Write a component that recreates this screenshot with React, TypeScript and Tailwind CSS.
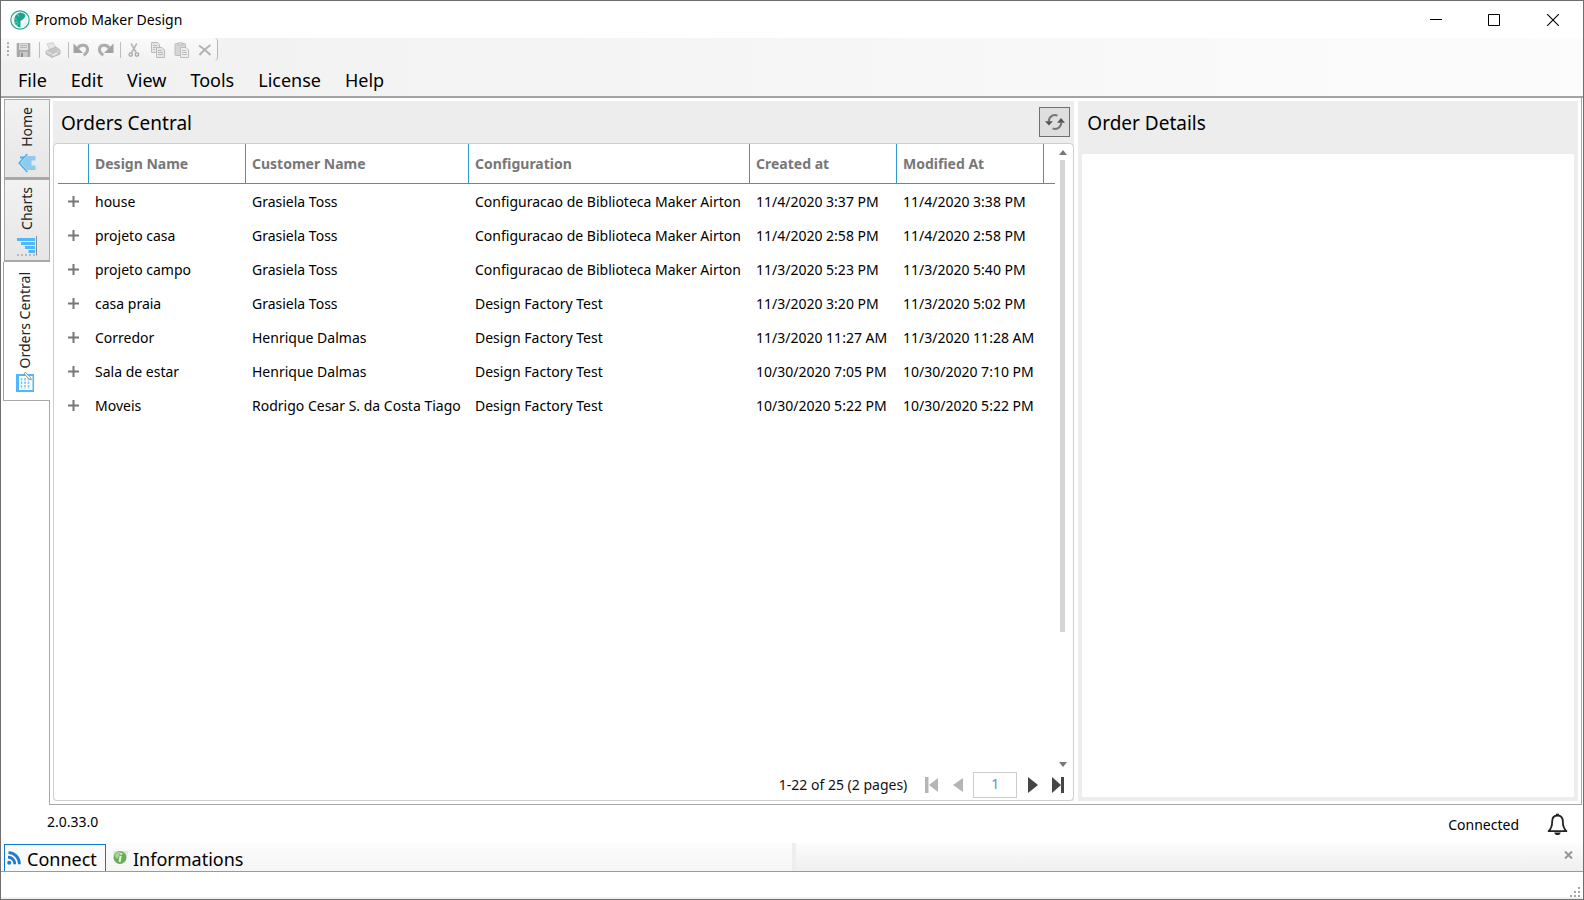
import React from "react";

type Order = { design: string; customer: string; config: string; created: string; modified: string };

const orders: Order[] = [
  { design: "house", customer: "Grasiela Toss", config: "Configuracao de Biblioteca Maker Airton", created: "11/4/2020 3:37 PM", modified: "11/4/2020 3:38 PM" },
  { design: "projeto casa", customer: "Grasiela Toss", config: "Configuracao de Biblioteca Maker Airton", created: "11/4/2020 2:58 PM", modified: "11/4/2020 2:58 PM" },
  { design: "projeto campo", customer: "Grasiela Toss", config: "Configuracao de Biblioteca Maker Airton", created: "11/3/2020 5:23 PM", modified: "11/3/2020 5:40 PM" },
  { design: "casa praia", customer: "Grasiela Toss", config: "Design Factory Test", created: "11/3/2020 3:20 PM", modified: "11/3/2020 5:02 PM" },
  { design: "Corredor", customer: "Henrique Dalmas", config: "Design Factory Test", created: "11/3/2020 11:27 AM", modified: "11/3/2020 11:28 AM" },
  { design: "Sala de estar", customer: "Henrique Dalmas", config: "Design Factory Test", created: "10/30/2020 7:05 PM", modified: "10/30/2020 7:10 PM" },
  { design: "Moveis", customer: "Rodrigo Cesar S. da Costa Tiago", config: "Design Factory Test", created: "10/30/2020 5:22 PM", modified: "10/30/2020 5:22 PM" },
];

const columns = ["Design Name", "Customer Name", "Configuration", "Created at", "Modified At"];

function AppLogo() {
  return (
    <svg width="20" height="20" viewBox="0 0 20 20" aria-hidden="true">
      <circle cx="10" cy="10" r="9.2" fill="#fff" stroke="#2aa893" strokeWidth="1.2" />
      <path d="M10.500 2.500A7.600 7.600 0 0 0 10.500 17.500z" fill="#17a58c" />
      <path d="M10 2.500a7.500 7.500 0 0 1 5.500 2.400L14.500 8l-2.600 2.200L10 11z" fill="#17a58c" />
      <path d="M16.800 6.500A7.400 7.400 0 0 1 11.500 17.200z" fill="#e3f5f1" />
      <path d="M3 8l4 1.500M4 13.500l4-2M6 16l2.500-3M7 3.500l2 3" stroke="#8fd8cb" strokeWidth=".8" />
    </svg>
  );
}

function SaveIcon() {
  return (
    <svg width="15" height="16" viewBox="0 0 15 16" aria-hidden="true">
      <path d="M1.500 1h12a.8.8 0 0 1 .8.8v12.400a.8.8 0 0 1-.8.8h-12a.8.8 0 0 1-.8-.8V1.800a.8.8 0 0 1 .8-.8z" fill="#a9a9a9" />
      <path d="M3 1.500h9V8H3z" fill="#dcdcdc" />
      <path d="M4 3.500h7M4 5.500h7" stroke="#b5b5b5" />
      <path d="M4 10h7.500v5H4z" fill="#c9c9c9" />
      <path d="M5 11h2v4H5z" fill="#8f8f8f" />
    </svg>
  );
}

function PrintIcon() {
  return (
    <svg width="16" height="16" viewBox="0 0 16 16" aria-hidden="true">
      <path d="M2 2l6-1.500L11 6l-6 2z" fill="#e6e6e6" stroke="#c6c6c6" strokeWidth=".8" />
      <path d="M1 9l10-4 4 3v4l-8 3.500-6-3.500z" fill="#c6c6c6" stroke="#b4b4b4" strokeWidth=".8" />
      <path d="M1.500 9.500l6 3L14.500 9" fill="none" stroke="#ececec" />
      <path d="M6 12.500l6-2.500 2 1.500-6 3z" fill="#ececec" stroke="#b4b4b4" strokeWidth=".6" />
    </svg>
  );
}

function UndoIcon({ flip = false }: { flip?: boolean }) {
  return (
    <svg width="17" height="16" viewBox="0 0 17 16" className={flip ? "-scale-x-100" : ""} aria-hidden="true">
      <path d="M.5 1.500v9.500H10z" fill="#a2a2a2" />
      <path d="M4.500 6.500C6.500 2.800 13.200 1.800 14.500 6.500c.5 3-1.300 5-3.800 6.700" fill="none" stroke="#adadad" strokeWidth="3" />
    </svg>
  );
}

function CutIcon() {
  return (
    <svg width="12" height="16" viewBox="0 0 12 16" fill="none" aria-hidden="true">
      <path d="M3 1.500l5.200 9M8.800 1.500l-5.200 9" stroke="#b4b4b4" strokeWidth="1.500" />
      <circle cx="2.800" cy="12.500" r="1.700" stroke="#a5a5a5" strokeWidth="1.300" />
      <circle cx="9" cy="12.500" r="1.700" stroke="#a5a5a5" strokeWidth="1.300" />
    </svg>
  );
}

function CopyIcon() {
  return (
    <svg width="16" height="16" viewBox="0 0 16 16" fill="#e6e6e6" stroke="#bababa" aria-hidden="true">
      <path d="M1.500.5h6l2 2v8h-8z" />
      <path d="M3 3.500h4M3 5.500h4M3 7.500h2" />
      <path d="M6.500 5.500h5.500l2.500 2.500v7.500h-8z" />
      <path d="M8 8.500h4M8 10.500h5M8 12.500h5" />
    </svg>
  );
}

function PasteIcon() {
  return (
    <svg width="16" height="16" viewBox="0 0 16 16" fill="#d6d6d6" stroke="#bdbdbd" aria-hidden="true">
      <rect x="1" y="1.500" width="10.500" height="12" rx="1" />
      <path d="M4 .8h4.500v2.400H4z" fill="#e3e3e3" />
      <path d="M6.500 5.500H12l2.500 2.500v7.500h-8z" fill="#eee" />
      <path d="M8 8.500h4M8 10.500h5M8 12.500h5" />
    </svg>
  );
}

function DeleteIcon() {
  return (
    <svg width="14" height="12" viewBox="0 0 14 12" fill="none" aria-hidden="true">
      <path d="M1 1.500C5 4 9 7.500 12.500 11M12.500 1C8 4 4 8 1.500 11" stroke="#b2b2b2" strokeWidth="2" />
    </svg>
  );
}

function HomeIcon() {
  return (
    <svg width="18" height="20" viewBox="0 0 18 20" aria-hidden="true">
      <path d="M9 3h8.500v4.500h-4v5h4V17H9L3 10z" fill="#8ccbee" />
      <path d="M9.300 1L1.200 10l8.100 9" fill="none" stroke="#45b0f5" strokeWidth="1.600" />
      <path d="M2 4.500h4" stroke="#45b0f5" strokeWidth="2" />
    </svg>
  );
}

function ChartsIcon() {
  return (
    <svg width="20" height="20" viewBox="0 0 20 20" aria-hidden="true">
      <path d="M0 2h18v3H0zM4 6h14v3H4zM8 10h10v3H8zM11.500 14h6.500v3h-6.500z" fill="#4fb8fa" />
      <path d="M19.500 0v19.500" stroke="#8a8a8a" />
      <path d="M0 19h20" stroke="#8a8a8a" strokeDasharray="2 2" />
    </svg>
  );
}

function OrdersIcon() {
  return (
    <svg width="18" height="20" viewBox="0 0 18 20" aria-hidden="true">
      <path d="M0 2h18v18H0z" fill="#4fb8fa" />
      <path d="M3 4h13.500v14H3z" fill="#fff" />
      <path d="M5.500 6v11M9 6v11M12.500 6v11" stroke="#7cc8f8" strokeWidth="1.600" strokeDasharray="2.500 1" />
      <path d="M8 1.500l1.500-1.200 5 5 .8 2.500-2.500-.8z" fill="#f3f3f3" stroke="#8a8a8a" strokeWidth=".9" />
    </svg>
  );
}

function RefreshIcon() {
  return (
    <svg width="20" height="18" viewBox="0 0 20 18" fill="none" aria-hidden="true">
      <path d="M3.800 8.500A6.200 6.200 0 0 1 12.500 2.600" stroke="#777" strokeWidth="2" />
      <path d="M16.200 9.500A6.200 6.200 0 0 1 7.500 15.400" stroke="#777" strokeWidth="2" />
      <path d="M0 8.200h7.800L4 12.500z" fill="#555" />
      <path d="M20 9.800h-7.800L16 5z" fill="#555" />
    </svg>
  );
}

function BellIcon() {
  return (
    <svg width="21" height="23" viewBox="0 0 21 23" aria-hidden="true">
      <path d="M10.500 2.500c-3.700 0-5.300 2.500-5.300 5.700 0 5-.8 7.300-3.600 10h17.800c-2.800-2.700-3.600-5-3.600-10 0-3.200-1.600-5.700-5.300-5.700z" fill="none" stroke="#222" strokeWidth="1.800" strokeLinejoin="round" />
      <path d="M9 .8h3v1.800H9zM7.200 19.500h6.600c-.5 3.400-6.100 3.400-6.600 0z" fill="#222" />
    </svg>
  );
}

function RssIcon() {
  return (
    <svg width="14" height="14" viewBox="0 0 14 14" fill="none" aria-hidden="true">
      <circle cx="2.200" cy="11.800" r="2" fill="#1c7cd0" />
      <path d="M1 6.200a6.800 6.800 0 0 1 6.800 7M1.500 1.600c6.400.2 10.800 5 11 11.600" stroke="#1c7cd0" strokeWidth="2.800" />
    </svg>
  );
}

function InfoIcon() {
  return (
    <svg width="16" height="15" viewBox="0 0 16 15" aria-hidden="true">
      <path d="M1.500 1H16l-.5 5H1z" fill="#d8ead3" />
      <circle cx="8" cy="7.500" r="6.500" fill="#6cac58" />
      <path d="M2.500 6A5.500 5.500 0 0 1 9 1.800L5.500 9z" fill="#a5d195" />
      <path d="M9.500 3l-.4 1.800M8.600 5.800l-1 6" stroke="#e6f3e2" strokeWidth="2" />
    </svg>
  );
}

function Grip() {
  return (
    <svg width="2" height="15" viewBox="0 0 2 15" fill="#a8a8a8" aria-hidden="true">
      <path d="M0 0h2v2H0zM0 4h2v2H0zM0 8h2v2H0zM0 12h2v2H0z" />
    </svg>
  );
}

function Divider() {
  return <span className="h-4 w-px bg-[#bdbdbd]" />;
}

function ToolButton({ label, children }: { label: string; children: React.ReactNode }) {
  return (
    <button type="button" aria-label={label} disabled className="flex h-5 w-6 items-center justify-center">
      {children}
    </button>
  );
}

function SideTab({ label, icon, active = false, size }: { label: string; icon: React.ReactNode; active?: boolean; size: string }) {
  const look = active
    ? "w-[47px] gap-[4px] border-l border-[#a0a0a0] bg-white pr-[5px] pb-[8px]"
    : "w-[46px] gap-[6px] border border-b-2 border-[#a9a9a9] bg-linear-to-b from-[#f2f2f2] to-[#e6e6e6] pb-[4px]";
  return (
    <button type="button" role="tab" aria-selected={active} className={`flex flex-col items-center justify-end ${look} ${size}`}>
      <span className="rotate-180 text-[14px] leading-[18px] whitespace-nowrap text-[#222] [writing-mode:vertical-rl]">{label}</span>
      {icon}
    </button>
  );
}

function OrdersTable() {
  return (
    <table className="w-full table-fixed border-separate border-spacing-0 text-left text-[14px] whitespace-nowrap">
      <colgroup>
        <col className="w-[31px]" />
        <col className="w-[157px]" />
        <col className="w-[223px]" />
        <col className="w-[281px]" />
        <col className="w-[147px]" />
        <col className="w-[147px]" />
        <col />
      </colgroup>
      <thead>
        <tr className="h-[40px] text-[#777]">
          <th className="border-r border-b border-[#2f9bd0] p-0" />
          {columns.map((c) => (
            <th key={c} scope="col" className="border-r border-b border-[#2f9bd0] px-[6px] py-0 font-bold">{c}</th>
          ))}
          <th className="border-b border-[#2f9bd0] p-0" />
        </tr>
      </thead>
      <tbody className="text-black">
        {orders.map((o) => (
          <tr key={o.design} className="h-[34px]">
            <td className="p-0">
              <button type="button" aria-label={`Expand ${o.design}`} className="flex h-5 w-[31px] items-center justify-center">
                <svg width="11" height="11" viewBox="0 0 11 11" aria-hidden="true">
                  <path d="M5.500 0v11M0 5.500h11" stroke="#777" strokeWidth="2" />
                </svg>
              </button>
            </td>
            <td className="px-[6px] py-0">{o.design}</td>
            <td className="px-[6px] py-0">{o.customer}</td>
            <td className="px-[6px] py-0">{o.config}</td>
            <td className="px-[6px] py-0">{o.created}</td>
            <td className="px-[6px] py-0">{o.modified}</td>
            <td className="p-0" />
          </tr>
        ))}
      </tbody>
    </table>
  );
}

function ScrollBar() {
  return (
    <div className="flex w-[15px] flex-col items-center pt-[6px] pb-[2px]">
      <svg width="8" height="5" viewBox="0 0 8 5" aria-hidden="true"><path d="M0 5l4-5 4 5z" fill="#777" /></svg>
      <div className="my-[5px] w-full flex-1">
        <div className="mx-auto h-[79%] w-[5px] bg-[#d4d4d4]" />
      </div>
      <svg width="8" height="5" viewBox="0 0 8 5" aria-hidden="true"><path d="M0 0l4 5 4-5z" fill="#777" /></svg>
    </div>
  );
}

function Pager() {
  return (
    <nav aria-label="Pages" className="flex h-[31px] items-center justify-end pr-[8px]">
      <span className="mr-[18px] text-[14px] text-[#111]">1-22 of 25 (2 pages)</span>
      <button type="button" aria-label="First page" disabled>
        <svg width="14" height="16" viewBox="0 0 14 16" fill="#b4b5b6"><path d="M0 0h3.500v16H0zM13 1v14L4 8z" /></svg>
      </button>
      <button type="button" aria-label="Previous page" disabled className="ml-[14px]">
        <svg width="10" height="16" viewBox="0 0 10 16" fill="#b4b5b6"><path d="M10 1v14L0 8z" /></svg>
      </button>
      <input aria-label="Page number" defaultValue="1" className="mx-[10px] h-[26px] w-[44px] border border-[#ccc] bg-white pb-[2px] text-center text-[14px] text-[#6d8db5]" />
      <button type="button" aria-label="Next page" className="ml-[1px]">
        <svg width="11" height="16" viewBox="0 0 11 16" fill="#444548"><path d="M0 0v16l10-8z" /></svg>
      </button>
      <button type="button" aria-label="Last page" className="ml-[13px]">
        <svg width="13" height="16" viewBox="0 0 13 16" fill="#444548"><path d="M0 0v16l9-8zM9 0h3v16H9z" /></svg>
      </button>
    </nav>
  );
}

export default function App() {
  return (
    <div className="flex min-h-screen flex-col border border-[#6e6e6e] bg-white font-['Noto_Sans','Open_Sans',sans-serif] text-black">
      <header className="flex h-[37px] items-center pl-[9px]">
        <AppLogo />
        <h1 className="ml-[5px] text-[14px]">Promob Maker Design</h1>
        <div className="ml-auto flex h-full">
          <button type="button" aria-label="Minimize" className="flex w-[58px] items-center justify-center">
            <svg width="12" height="12" viewBox="0 0 12 12"><path d="M0 5.500h12" stroke="#000" /></svg>
          </button>
          <button type="button" aria-label="Maximize" className="flex w-[58px] items-center justify-center">
            <svg width="12" height="12" viewBox="0 0 12 12"><path d="M.5.5h11v11H.5z" fill="none" stroke="#000" /></svg>
          </button>
          <button type="button" aria-label="Close" className="flex w-[60px] items-center justify-center">
            <svg width="12" height="12" viewBox="0 0 12 12"><path d="M0 0l12 12M12 0L0 12" stroke="#000" strokeWidth="1.100" /></svg>
          </button>
        </div>
      </header>

      <div className="border-b-2 border-[#a3a3a3] bg-linear-to-r from-[#f0f0f0] to-[#fcfcfc]">
        <div role="toolbar" aria-label="Standard" className="flex h-[23px] w-[217px] items-center rounded border-r border-[#b8b8b8] bg-linear-to-b from-[#fafafa] to-[#f2f2f2] pl-[6px]">
          <Grip />
          <span className="ml-[3px] flex"><ToolButton label="Save"><SaveIcon /></ToolButton></span>
          <span className="ml-[3px] flex"><Divider /></span>
          <span className="ml-[1px] flex"><ToolButton label="Print"><PrintIcon /></ToolButton></span>
          <span className="ml-[3px] flex"><Divider /></span>
          <span className="ml-[1px] flex"><ToolButton label="Undo"><UndoIcon /></ToolButton></span>
          <ToolButton label="Redo"><UndoIcon flip /></ToolButton>
          <span className="ml-[3px] flex"><Divider /></span>
          <span className="ml-[1px] flex"><ToolButton label="Cut"><CutIcon /></ToolButton></span>
          <ToolButton label="Copy"><CopyIcon /></ToolButton>
          <ToolButton label="Paste"><PasteIcon /></ToolButton>
          <ToolButton label="Delete"><DeleteIcon /></ToolButton>
        </div>
        <nav aria-label="Main menu" className="flex h-[35px] items-center gap-[24px] pt-[3px] pl-[17px] text-[18px]">
          {["File", "Edit", "View", "Tools", "License", "Help"].map((m) => (
            <button key={m} type="button">{m}</button>
          ))}
        </nav>
      </div>

      <main className="flex flex-1 pl-[2px]">
        <div role="tablist" aria-orientation="vertical" className="z-10 flex w-[47px] flex-col items-start pt-px">
          <div className="flex w-full justify-end"><SideTab label="Home" icon={<HomeIcon />} size="h-[80px]" /></div>
          <div className="flex w-full justify-end"><SideTab label="Charts" icon={<ChartsIcon />} size="h-[83px]" /></div>
          <SideTab label="Orders Central" icon={<OrdersIcon />} size="h-[138px]" active />
          <div className="w-full flex-1 border-t border-r border-[#a9a9a9]" />
        </div>
        <div className="mr-px flex min-w-0 flex-1 gap-[4px] border-r border-b border-[#a9a9a9] py-[3px] pr-[3px] pl-[3px]">
          <section className="flex min-w-0 flex-[1022] flex-col bg-[#ededed]">
            <div className="flex h-[42px] items-center justify-between pr-[4px] pl-[8px]">
              <h2 className="pt-[3px] text-[19px]">Orders Central</h2>
              <button type="button" aria-label="Refresh" className="flex h-[30px] w-[31px] items-center justify-center border border-[#6f6f6f] bg-[#dedede]">
                <RefreshIcon />
              </button>
            </div>
            <div className="flex flex-1 flex-col rounded-sm border border-[#cfcfcf] bg-white">
              <div className="flex flex-1">
                <div className="min-w-0 flex-1 pl-[4px]"><OrdersTable /></div>
                <ScrollBar />
                <span className="w-[3px]" />
              </div>
              <Pager />
            </div>
          </section>
          <div className="flex min-w-0 flex-[500] bg-[#ededed]">
            <section className="flex flex-1 flex-col px-[4px] pb-[4px]">
              <h2 className="flex h-[53px] items-center pb-[8px] pl-[5px] text-[19px]">Order Details</h2>
              <div className="flex-1 bg-white" />
            </section>
          </div>
        </div>
      </main>

      <footer>
        <div className="flex h-[38px] items-center justify-between pr-[15px] pl-[46px] text-[14px]">
          <span className="pb-[6px]">2.0.33.0</span>
          <span className="flex items-center gap-[28px]">
            <span>Connected</span>
            <button type="button" aria-label="Notifications"><BellIcon /></button>
          </span>
        </div>
        <div className="flex h-[29px] border-b border-[#9a9a9a] bg-linear-to-b from-[#fcfcfc] to-[#efefef] text-[18px]">
          <div className="flex flex-1">
            <div role="tablist" className="flex flex-1 bg-linear-to-b from-[#fcfcfc] to-[#f5f5f5] pl-[3px]">
              <button type="button" role="tab" aria-selected className="mt-px flex w-[102px] items-center gap-[6px] border border-b-0 border-[#0f78cc] bg-[#fafafa] pl-[2px]">
                <RssIcon />
                <span className="mt-[2px] leading-6">Connect</span>
              </button>
              <button type="button" role="tab" aria-selected={false} className="mt-px flex items-center gap-[5px] pl-[6px]">
                <InfoIcon />
                <span className="mt-[2px] leading-6">Informations</span>
              </button>
            </div>
          </div>
          <div className="flex flex-1">
            <div className="flex flex-1 items-start justify-end border-l-4 border-[#eeeeee] pt-[8px] pr-[10px]">
              <button type="button" aria-label="Close panel">
                <svg width="9" height="8" viewBox="0 0 9 8"><path d="M1 .5l7 7M8 .5l-7 7" stroke="#969696" strokeWidth="2" /></svg>
              </button>
            </div>
          </div>
        </div>
        <div className="flex h-[27px] items-end justify-end border-b-2 border-[#f0f0f0] pr-[3px]">
          <svg width="10" height="10" viewBox="0 0 10 10" fill="#a6a6a6" aria-hidden="true">
            <path d="M8 0h2v2H8zM4 4h2v2H4zM8 4h2v2H8zM0 8h2v2H0zM4 8h2v2H4zM8 8h2v2H8z" />
          </svg>
        </div>
      </footer>
    </div>
  );
}
